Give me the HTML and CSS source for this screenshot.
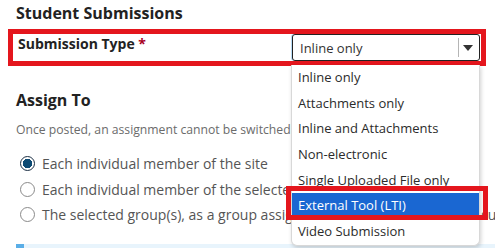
FILE: index.html
```html
<!DOCTYPE html>
<html lang="en">
<head>
<meta charset="utf-8">
<title>Student Submissions</title>
<link rel="stylesheet" href="styles.css">
</head>
<body>
<main class="page">
  <h2 class="section-title">Student Submissions</h2>
  <div class="field-row">
    <label class="field-label">Submission Type <span class="req">*</span></label>
    <div class="select">
      <span class="select-value">Inline only</span>
      <span class="select-divider"></span>
      <span class="select-arrow"></span>
    </div>
    <ul class="dropdown">
      <li class="option">Inline only</li>
      <li class="option">Attachments only</li>
      <li class="option">Inline and Attachments</li>
      <li class="option">Non-electronic</li>
      <li class="option">Single Uploaded File only</li>
      <li class="option is-active">External Tool (LTI)</li>
      <li class="option">Video Submission</li>
    </ul>
  </div>
  <h2 class="section-title assign-title">Assign To</h2>
  <p class="hint">Once posted, an assignment cannot be switched to a different type.</p>
  <div class="radio-list">
    <label class="radio-row"><input class="radio" type="radio" name="assign" checked><span>Each individual member of the site</span></label>
    <label class="radio-row"><input class="radio" type="radio" name="assign"><span>Each individual member of the selected group(s)</span></label>
    <label class="radio-row"><input class="radio" type="radio" name="assign"><span>The selected group(s), as a group assignment when each group will submit one file</span></label>
  </div>
  <div class="info-bar"></div>
</main>
</body>
</html>
```
FILE: styles.css
```css
html, body {
  margin: 0;
  padding: 0;
  background: #fff;
}
body {
  width: 495px;
  height: 248px;
  overflow: hidden;
  font-family: "Open Sans", "DejaVu Sans", sans-serif;
  color: #262626;
}
.page {
  display: flex;
  flex-direction: column;
}
.section-title {
  margin: 2px 0 0;
  padding: 0 16px;
  font-size: 16px;
  font-weight: 700;
  line-height: 22px;
  color: #222;
  white-space: nowrap;
}
.field-row {
  position: relative;
  display: flex;
  align-items: flex-start;
  margin: 5px 9px 0 8px;
  height: 27px;
  border: 5px solid #e4161d;
}
.field-label {
  padding-left: 5px;
  font-size: 14px;
  font-weight: 700;
  line-height: 20px;
  color: #222;
}
.req {
  color: #a8001f;
  font-weight: 700;
}
.select {
  display: flex;
  align-items: center;
  margin-left: auto;
  margin-right: 1px;
  width: 188px;
  height: 27px;
  box-sizing: border-box;
  border: 1px solid #222;
  border-radius: 3px;
  padding-left: 7px;
  background: #fff;
  box-shadow: -1px 0 0 #b9dcf6;
}
.select-value {
  flex: 1;
  font-size: 13px;
  color: #333;
  white-space: nowrap;
}
.select-divider {
  width: 1px;
  height: 19px;
  background: #b5b5b5;
}
.select-arrow {
  margin: 1px 6px 0 4px;
  width: 0;
  height: 0;
  border-left: 5px solid transparent;
  border-right: 5px solid transparent;
  border-top: 6px solid #333;
}
.dropdown {
  position: absolute;
  z-index: 10;
  top: 31px;
  left: 278px;
  width: 189px;
  margin: 0;
  padding: 0;
  list-style: none;
  background: #fff;
  box-sizing: border-box;
  border: 1px solid #d8d8d8;
  border-top: none;
  border-radius: 0 0 6px 6px;
  box-shadow: 1px 2px 4px rgba(0, 0, 0, 0.18);
}
.option {
  position: relative;
  height: 25.7px;
  line-height: 25.7px;
  padding-left: 6px;
  font-size: 13px;
  color: #2b2b2b;
  white-space: nowrap;
}
.option.is-active {
  background: #1a67d2;
  color: #fff;
}
.option.is-active::after {
  content: "";
  position: absolute;
  left: -6px;
  right: -9px;
  top: -7.5px;
  bottom: -1px;
  border: 5px solid #e4161d;
}
.assign-title {
  margin-top: 23px;
}
.hint {
  margin: 10px 0 0;
  padding: 0 16px;
  font-size: 12.2px;
  line-height: 18px;
  color: #6b6b6b;
  white-space: nowrap;
}
.radio-list {
  display: flex;
  flex-direction: column;
  margin-top: 12px;
  padding-left: 20px;
}
.radio-row {
  display: flex;
  align-items: center;
  gap: 7px;
  height: 25.5px;
  font-size: 14px;
  color: #555;
  white-space: nowrap;
}
.radio {
  appearance: none;
  -webkit-appearance: none;
  margin: 0;
  flex: none;
  width: 15px;
  height: 15px;
  box-sizing: border-box;
  border: 1px solid #8a8a8a;
  border-radius: 50%;
  background: #fff;
}
.radio:checked {
  border: 1.5px solid #1b2f44;
  background: radial-gradient(circle, #0d4a73 0 4.6px, #fff 5px);
}
.info-bar {
  margin: 16px 0 0 16px;
  height: 10px;
  background: #e8f4fc;
  border-left: 8px solid #5aaee7;
}
```
